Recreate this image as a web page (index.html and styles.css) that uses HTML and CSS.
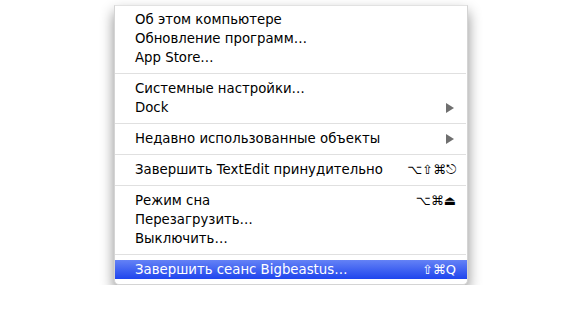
FILE: index.html
```html
<!DOCTYPE html>
<html lang="ru">
<head>
    <meta charset="UTF-8">
    <meta name="viewport" content="width=device-width, initial-scale=1.0">
    <title>Меню Apple</title>
    <link rel="stylesheet" href="styles.css">
</head>
<body>
    <div class="page">
        <div class="menu">
            <div class="item">Об этом компьютере</div>
            <div class="item">Обновление программ…</div>
            <div class="item">App Store…</div>

            <div class="sep"></div>

            <div class="item">Системные настройки…</div>
            <div class="item">Dock <span class="arrow"></span></div>

            <div class="sep"></div>

            <div class="item">Недавно использованные объекты <span class="arrow"></span></div>

            <div class="sep"></div>

            <div class="item">Завершить TextEdit принудительно <span class="keys">⌥⇧⌘⎋</span></div>

            <div class="sep"></div>

            <div class="item">Режим сна <span class="keys">⌥⌘⏏</span></div>
            <div class="item">Перезагрузить…</div>
            <div class="item">Выключить…</div>

            <div class="sep"></div>

            <div class="item selected">Завершить сеанс Bigbeastus… <span class="keys">⇧⌘Q</span></div>
        </div>
    </div>
</body>
</html>
```

FILE: styles.css
```css
body {
    margin: 0;
    background-color: #FFFFFF;
    font-family: 'DejaVu Sans', 'Liberation Sans', sans-serif;
    font-size: 13.3px;
    color: #000;
}

.page {
    padding: 5px 0 0 114px;
}

.menu {
    width: 354px;
    box-sizing: border-box;
    padding: 4px 0 5px 0;
    background-color: #FFFFFF;
    border: 1px solid #d4d4d4;
    border-top-color: #e2e2e2;
    border-radius: 0 0 5px 5px;
    box-shadow: 0 7px 14px rgba(0, 0, 0, 0.45);
}

.item {
    height: 19px;
    padding: 0 11px 0 20px;
    display: flex;
    justify-content: space-between;
    align-items: center;
    white-space: nowrap;
}

.item.selected {
    background: linear-gradient(#6482f6, #1f45ed);
    color: #FFFFFF;
}

.keys {
    font-size: 13px;
}

.arrow {
    width: 0;
    height: 0;
    margin-right: 2px;
    border-top: 5px solid transparent;
    border-bottom: 5px solid transparent;
    border-left: 8px solid #6f6f6f;
}

.sep {
    height: 12px;
    display: flex;
    align-items: center;
}

.sep::before {
    content: "";
    flex: 1;
    margin: 0 1px 0 0;
    border-top: 1px solid #e0e0e0;
}
```
